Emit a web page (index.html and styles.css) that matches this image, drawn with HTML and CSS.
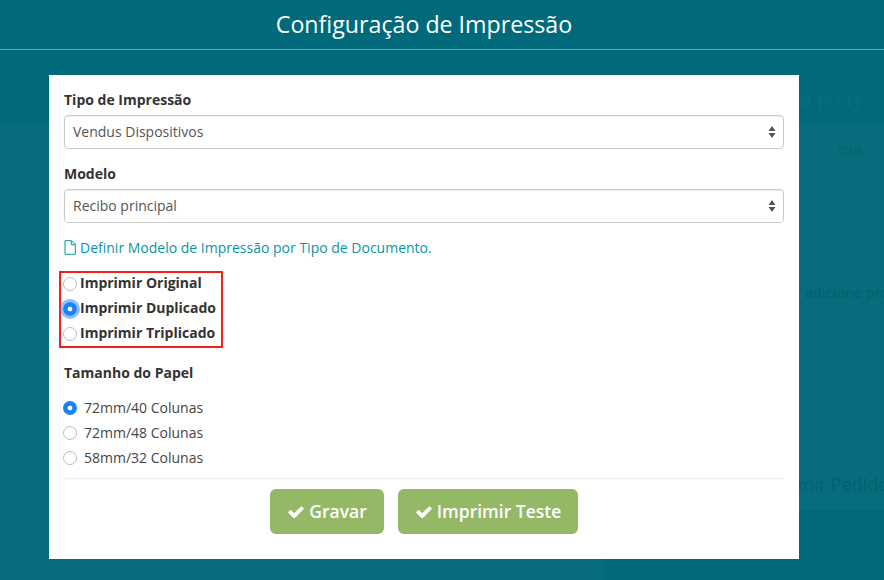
FILE: index.html
```html
<!DOCTYPE html>
<html lang="pt">
<head>
<meta charset="utf-8">
<title>Configuração de Impressão</title>
<link rel="stylesheet" href="styles.css">
</head>
<body>
<div class="ghost" aria-hidden="true">
  <div class="ghost-panel"></div>
  <div class="ghost-footer"></div>
  <span class="g g-caixa">Caixa ⌄</span>
  <span class="g g-doc">Documentos ⌄</span>
  <span class="g g-imp">Impressão</span>
  <span class="g g-da">Venda (1/1)</span>
  <span class="g g-qtd">Qtd</span>
  <span class="g g-adi">adicione pro</span>
  <span class="g g-ped">Imprimir Pedido</span>
</div>
<header class="title-bar"><h1>Configuração de Impressão</h1></header>
<main class="modal">
  <label class="field-label">Tipo de Impressão</label>
  <div class="select"><span>Vendus Dispositivos</span>
    <svg class="arrows" viewBox="0 0 8 14" width="8" height="14"><path d="M4 1 7.500 6H.5zM4 13 .5 8h7z"/></svg>
  </div>
  <label class="field-label second">Modelo</label>
  <div class="select"><span>Recibo principal</span>
    <svg class="arrows" viewBox="0 0 8 14" width="8" height="14"><path d="M4 1 7.500 6H.5zM4 13 .5 8h7z"/></svg>
  </div>
  <a class="doc-link">
    <svg viewBox="0 0 12 15" width="12" height="15"><path d="M1 .7h6.500L11.300 4.500V14.300H1zM7.300 .9V4.700H11.200" fill="none" stroke="#0a95a3" stroke-width="1"/></svg>
    <span>Definir Modelo de Impressão por Tipo de Documento.</span>
  </a>
  <div class="copies">
    <div class="copy"><i class="radio"></i><b>Imprimir Original</b></div>
    <div class="copy"><i class="radio on focus"></i><b>Imprimir Duplicado</b></div>
    <div class="copy"><i class="radio"></i><b>Imprimir Triplicado</b></div>
  </div>
  <div class="field-label paper-title">Tamanho do Papel</div>
  <div class="paper">
    <div class="size"><i class="radio on"></i><span>72mm/40 Colunas</span></div>
    <div class="size"><i class="radio"></i><span>72mm/48 Colunas</span></div>
    <div class="size"><i class="radio"></i><span>58mm/32 Colunas</span></div>
  </div>
  <div class="actions">
    <button class="btn btn-save"><svg viewBox="0 0 1792 1792" width="18" height="18"><path fill="#fff" d="M1671 566q0 40-28 68l-724 724-136 136q-28 28-68 28t-68-28l-136-136-362-362q-28-28-28-68t28-68l136-136q28-28 68-28t68 28l294 295 656-657q28-28 68-28t68 28l136 136q28 28 28 68z"/></svg>Gravar</button>
    <button class="btn btn-test"><svg viewBox="0 0 1792 1792" width="18" height="18"><path fill="#fff" d="M1671 566q0 40-28 68l-724 724-136 136q-28 28-68 28t-68-28l-136-136-362-362q-28-28-28-68t28-68l136-136q28-28 68-28t68 28l294 295 656-657q28-28 68-28t68 28l136 136q28 28 28 68z"/></svg>Imprimir Teste</button>
  </div>
</main>
</body>
</html>
```
FILE: styles.css
```css
* { box-sizing: border-box; }
html, body { margin: 0; height: 580px; overflow: hidden; }
body {
  position: relative;
  background: #006a7a;
  font-family: "Open Sans", "Noto Sans", sans-serif;
  color: #333;
  font-size: 14px;
}
.ghost { position: absolute; inset: 0; overflow: hidden; }
.ghost-panel { position: absolute; left: 0; right: 0; top: 125px; bottom: 0; background: #076c7c; }
.ghost-footer { position: absolute; left: 604px; right: 0; top: 510px; bottom: 0; background: #006a7a; }
.g { position: absolute; color: #06626f; white-space: nowrap; }
.g-caixa { left: 614px; top: 15px; font-size: 16px; color: #05687a; }
.g-doc { left: 698px; top: 15px; font-size: 16px; color: #05677a; }
.g-imp { left: 836px; top: 15px; font-size: 16px; color: #05677a; }
.g-da { right: 24px; top: 87px; font-size: 20px; font-weight: 600; color: #056e7d; }
.g-qtd { left: 838px; top: 141px; font-size: 13px; font-weight: 700; color: #06656f; }
.g-adi { left: 805px; top: 283px; font-size: 14px; font-weight: 600; color: #05626f; }
.g-ped { left: 753px; top: 472px; font-size: 18px; color: #05606e; }

.title-bar {
  position: relative;
  height: 50px;
  border-bottom: 1px solid #6aa6b0;
  display: flex;
  justify-content: center;
  padding-right: 36px;
}
.title-bar h1 {
  margin: 8px 0 0;
  font-size: 23.2px;
  line-height: 33px;
  font-weight: 400;
  color: #fff;
}
.modal {
  position: relative;
  width: 750px;
  height: 484px;
  margin: 25px 0 0 49px;
  padding: 15px;
  background: #fff;
}
.field-label {
  display: block;
  font-weight: 700;
  font-size: 14px;
  line-height: 20px;
  margin-bottom: 5px;
  color: #333;
}
.second { margin-top: 15px; }
.select {
  height: 34px;
  border: 1px solid #ccc;
  border-radius: 4px;
  box-shadow: inset 0 1px 1px rgba(0,0,0,.075);
  padding: 0 8px;
  display: flex;
  align-items: center;
  justify-content: space-between;
  color: #555;
  line-height: 32px;
}
.arrows { fill: #555; margin-right: -1px; }
.doc-link {
  display: flex;
  align-items: center;
  gap: 4px;
  margin-top: 14px;
  height: 20px;
  color: #0a95a3;
}
.copies {
  position: relative;
  margin: 14px 0 0 -5px;
  width: 164px;
  height: 77px;
  border: 2px solid #f5201c;
  padding: 0 0 0 2px;
}
.copy {
  display: flex;
  align-items: center;
  height: 25px;
  color: #333;
}
.copy:first-child { margin-top: -3px; }
.copy b { font-weight: 700; margin-left: 1px; }
.radio {
  display: block;
  flex: none;
  width: 14px;
  height: 14px;
  border-radius: 50%;
  border: 1.5px solid #bcbcbc;
  background: #fff;
}
.radio.on {
  border: 0;
  background: radial-gradient(circle, #fff 0 2px, #1a82f7 2.700px);
}
.radio.focus { box-shadow: 0 0 0 3px rgba(26,130,247,.5); }
.copy .radio { margin: 2px 2px 0 0; }
.paper-title { margin: 15px 0 0; line-height: 20px; }
.paper { margin-top: 12px; }
.size {
  display: flex;
  align-items: center;
  gap: 7px;
  height: 25px;
  color: #444;
  margin-left: -1px;
}
.actions {
  margin-top: 8px;
  border-top: 1px solid #eee;
  padding-top: 10px;
  display: flex;
  justify-content: center;
  gap: 14px;
}
.btn {
  height: 45px;
  border: 0;
  border-radius: 6px;
  background: #94b866;
  color: #fff;
  font-family: inherit;
  font-size: 17.500px;
  font-weight: 600;
  line-height: 25px;
  display: flex;
  align-items: center;
  justify-content: center;
  gap: 4px;
  padding: 0;
}
.btn-save { width: 114px; }
.btn-test { width: 180px; }
```
